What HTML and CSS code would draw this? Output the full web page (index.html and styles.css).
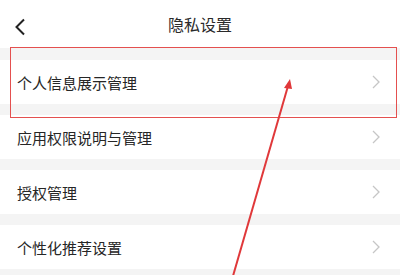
FILE: index.html
```html
<!DOCTYPE html>
<html lang="zh-CN">
<head>
    <meta charset="UTF-8">
    <meta name="viewport" content="width=device-width, initial-scale=1.0">
    <title>隐私设置</title>
    <link rel="stylesheet" href="styles.css">
</head>
<body>
    <header class="topbar">
        <svg class="back" width="12" height="18" viewBox="0 0 12 18">
            <path d="M10 1.5 L2.5 9 L10 16.5" fill="none" stroke="#222" stroke-width="2"/>
        </svg>
        <h1>隐私设置</h1>
    </header>
    <div class="list">
        <div class="row">
            <span>个人信息展示管理</span>
            <svg class="arrow" width="8" height="14" viewBox="0 0 8 14"><path d="M1 1 L7 7 L1 13" fill="none" stroke="#c6c6c6" stroke-width="1.3"/></svg>
        </div>
        <div class="row">
            <span>应用权限说明与管理</span>
            <svg class="arrow" width="8" height="14" viewBox="0 0 8 14"><path d="M1 1 L7 7 L1 13" fill="none" stroke="#c6c6c6" stroke-width="1.3"/></svg>
        </div>
        <div class="row">
            <span>授权管理</span>
            <svg class="arrow" width="8" height="14" viewBox="0 0 8 14"><path d="M1 1 L7 7 L1 13" fill="none" stroke="#c6c6c6" stroke-width="1.3"/></svg>
        </div>
        <div class="row">
            <span>个性化推荐设置</span>
            <svg class="arrow" width="8" height="14" viewBox="0 0 8 14"><path d="M1 1 L7 7 L1 13" fill="none" stroke="#c6c6c6" stroke-width="1.3"/></svg>
        </div>
    </div>
    <!-- annotation over the screenshot -->
    <div class="highlight"></div>
    <svg class="pointer" width="400" height="275" viewBox="0 0 400 275">
        <line x1="233" y1="276" x2="288" y2="86" stroke="#e0383a" stroke-width="2"/>
        <path d="M290 79 L284 88 L292 89 Z" fill="#e0383a"/>
    </svg>
</body>
</html>
```

FILE: styles.css
```css
body {
    margin: 0;
    padding: 0;
    width: 400px;
    height: 275px;
    overflow: hidden;
    background-color: #f4f4f4;
    font-family: "Noto Sans CJK SC", "Noto Sans", sans-serif;
    color: #262626;
    position: relative;
}
.topbar {
    height: 48px;
    background-color: #fff;
    display: flex;
    align-items: center;
    justify-content: center;
    position: relative;
}
.topbar h1 {
    margin: 0;
    font-size: 16px;
    font-weight: normal;
    color: #2a2a2a;
}
.back {
    position: absolute;
    left: 14px;
    top: 18px;
}
.list {
    padding-top: 12px;
    display: flex;
    flex-direction: column;
    gap: 11px;
}
.row {
    height: 44px;
    background-color: #fff;
    display: flex;
    align-items: center;
    justify-content: space-between;
    padding: 0 20px 0 17px;
    font-size: 15px;
}
.highlight {
    position: absolute;
    left: 10px;
    top: 47px;
    width: 385px;
    height: 69px;
    border: 1.5px solid #e4504f;
}
.pointer {
    position: absolute;
    left: 0;
    top: 0;
}
```
